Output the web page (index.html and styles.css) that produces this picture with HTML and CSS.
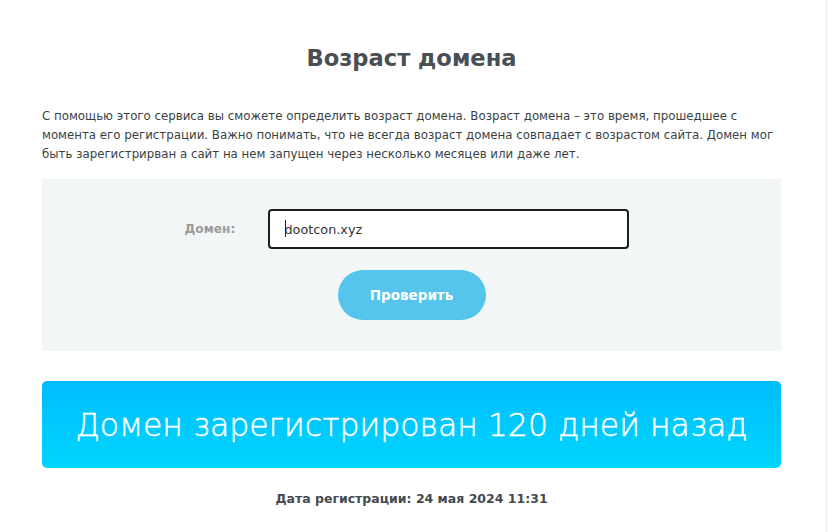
FILE: index.html
```html
<!DOCTYPE html>
<html lang="ru">
<head>
<meta charset="utf-8">
<title>Возраст домена</title>
<link rel="stylesheet" href="styles.css">
</head>
<body>
<div class="page">
  <main class="content">
    <h1 class="title">Возраст домена</h1>
    <p class="intro">С помощью этого сервиса вы сможете определить возраст домена. Возраст домена – это время, прошедшее с момента его регистрации. Важно понимать, что не всегда возраст домена совпадает с возрастом сайта. Домен мог быть зарегистрирван а сайт на нем запущен через несколько месяцев или даже лет.</p>
    <form class="check-form">
      <div class="field-row">
        <label class="field-label" for="domain">Домен:</label>
        <div class="field-input"><span class="caret"></span><input id="domain" class="input" type="text" value="dootcon.xyz"></div>
      </div>
      <button class="btn" type="button">Проверить</button>
    </form>
    <div class="result">Домен зарегистрирован 120 дней назад</div>
    <p class="reg-date">Дата регистрации: 24 мая 2024 11:31</p>
  </main>
  <div class="edge"></div>
</div>
</body>
</html>
```
FILE: styles.css
```css
html, body {
  margin: 0;
  padding: 0;
  background: #fff;
}
body {
  font-family: "DejaVu Sans", "Open Sans", sans-serif;
  color: #444;
}
.page {
  display: flex;
  height: 532px;
  overflow: hidden;
}
.content {
  flex: 1;
  padding: 0 45px 0 42px;
}
.edge {
  width: 1px;
  border-left: 1px solid #ececec;
  background: #fafafa;
}
.title {
  margin: 43px 0 0;
  text-align: center;
  font-size: 22.6px;
  line-height: 30px;
  font-weight: 700;
  color: #4a4f55;
}
.intro {
  margin: 34px 0 0;
  font-size: 11.8px;
  line-height: 19px;
  color: #3a3f45;
}
.check-form {
  margin-top: 15px;
  background: #f3f6f7;
  height: 172px;
  box-sizing: border-box;
  padding-top: 30px;
  display: flex;
  flex-direction: column;
  align-items: center;
}
.field-row {
  display: flex;
  align-items: center;
  margin-left: -11px;
}
.field-label {
  width: 84px;
  padding-left: 1px;
  box-sizing: border-box;
  font-size: 12.2px;
  font-weight: 700;
  color: #9a9a9a;
}
.field-input {
  position: relative;
}
.input {
  box-sizing: border-box;
  width: 361px;
  height: 40px;
  border: 2px solid #1e1e1e;
  border-radius: 4px;
  padding: 0 15px;
  font-family: inherit;
  font-size: 12.8px;
  color: #333;
  background: #fff;
  outline: none;
}
.caret {
  position: absolute;
  left: 17px;
  top: 11px;
  width: 1px;
  height: 17px;
  background: #222;
}
.btn {
  margin-top: 21px;
  width: 148px;
  height: 50px;
  border: 0;
  border-radius: 25px;
  background: #55c5ed;
  color: #fff;
  font-family: inherit;
  font-size: 13.5px;
  font-weight: 700;
}
.result {
  margin-top: 30px;
  height: 87px;
  border-radius: 5px;
  background: linear-gradient(#00bdfe, #00d5fe);
  color: #fff;
  font-size: 31.5px;
  font-weight: 300;
  -webkit-text-stroke: 0.45px #fff;
  display: flex;
  align-items: center;
  justify-content: center;
}
.reg-date {
  margin: 23px 0 0;
  text-align: center;
  font-size: 12.5px;
  font-weight: 700;
  color: #454a50;
}
```
